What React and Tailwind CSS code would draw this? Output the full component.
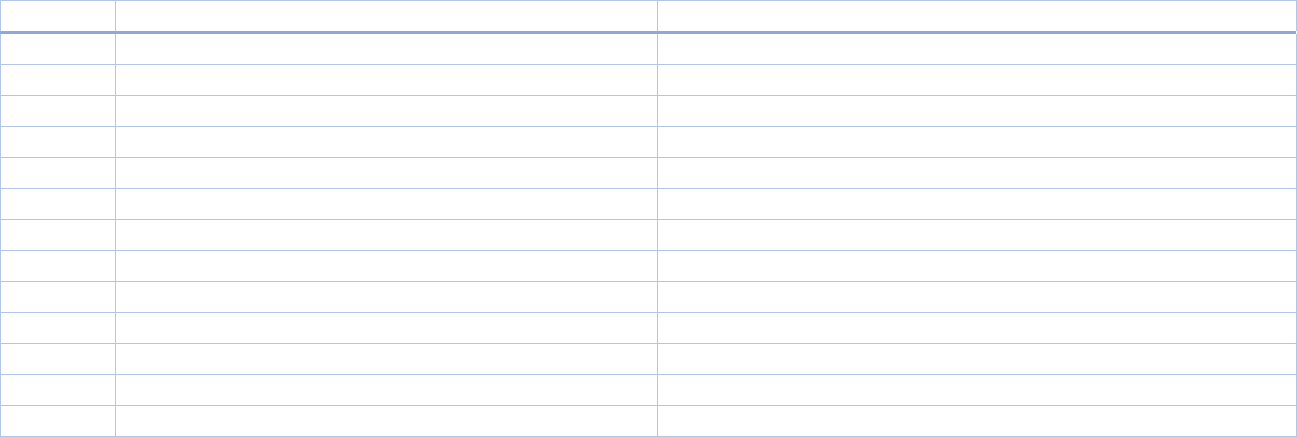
export default function App() {
  const rows = Array.from({ length: 13 });
  return (
    <div className="w-[1297px] h-[437px] bg-white overflow-hidden">
      <div className="flex border-t border-l border-[#b4c6e7] h-[31px]">
        <div className="w-[115px] border-r border-[#b4c6e7]" />
        <div className="w-[542px] border-r border-[#b4c6e7]" />
        <div className="w-[639px] border-r border-[#b4c6e7]" />
      </div>
      <div className="w-[1296px] h-[3px] bg-[#8eaadb]" />
      {rows.map((_, i) => (
        <div key={i} className="flex border-l border-[#b4c6e7] h-[31px]">
          <div className="w-[115px] border-r border-b border-[#b4c6e7]" />
          <div className="w-[542px] border-r border-b border-[#b4c6e7]" />
          <div className="w-[639px] border-r border-b border-[#b4c6e7]" />
        </div>
      ))}
    </div>
  );
}
